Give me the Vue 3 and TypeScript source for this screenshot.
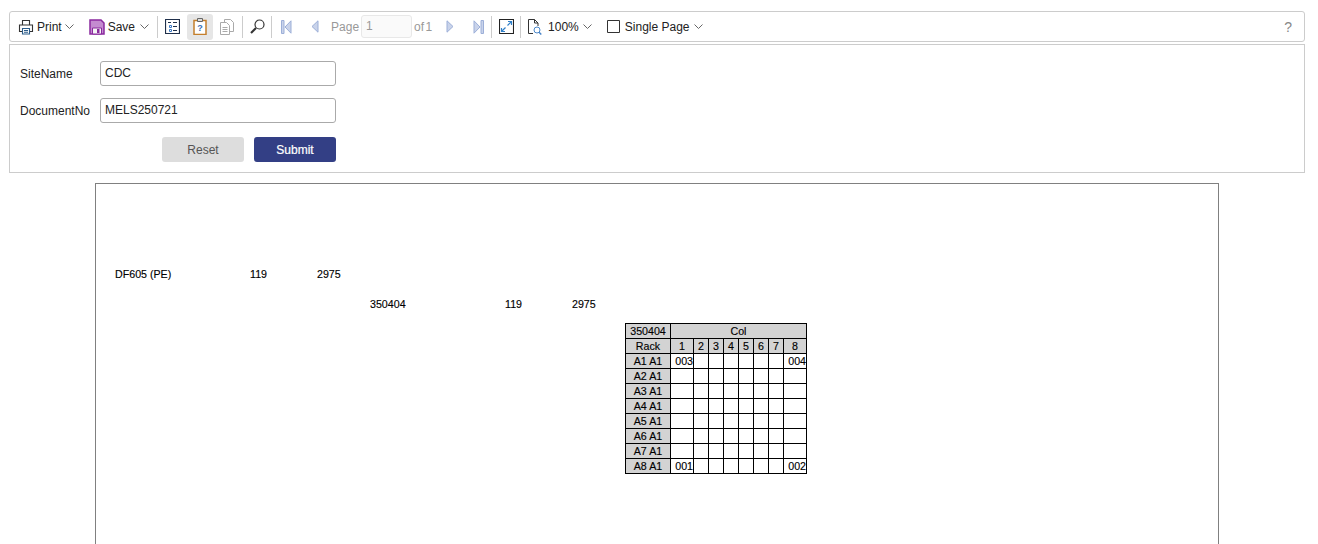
<script setup lang="ts">
const cols: number[] = [1, 2, 3, 4, 5, 6, 7, 8]
const racks: string[] = ['A1 A1', 'A2 A1', 'A3 A1', 'A4 A1', 'A5 A1', 'A6 A1', 'A7 A1', 'A8 A1']
const cells: Record<string, string> = {
  'A1 A1-1': '003',
  'A1 A1-8': '004',
  'A8 A1-1': '001',
  'A8 A1-8': '002',
}
</script>

<template>
  <div class="page">
    <div class="toolbar">
      <button class="tool t-print">
        <svg width="16" height="16" viewBox="0 0 16 16" fill="none" stroke="#333" stroke-width="1.100">
          <path d="M4.500 6V1.500h7V6M4.500 12.500H1.500v-6.500h13v6.500h-3" />
          <path d="M4.500 9.500h7v5.500h-7z" stroke="#2b5c8a" />
          <path d="M6 11.500h4M6 13.300h4" stroke="#2b5c8a" />
        </svg>
        <span>Print</span>
        <svg class="chev" width="9" height="5" viewBox="0 0 9 5"><path d="M.5.5l4 4 4-4" fill="none" stroke="#666" /></svg>
      </button>
      <button class="tool t-save">
        <svg width="16" height="16" viewBox="0 0 16 16">
          <path d="M1 1h11l3 3v11H1z" fill="#c48bd0" stroke="#8a2a9e" stroke-width="1.500" />
          <path d="M3.500 9h9v6h-9z" fill="#f4f4f4" stroke="#8a2a9e" />
          <path d="M8 10h2.500v4H8z" fill="#8a2a9e" />
        </svg>
        <span>Save</span>
        <svg class="chev" width="9" height="5" viewBox="0 0 9 5"><path d="M.5.5l4 4 4-4" fill="none" stroke="#666" /></svg>
      </button>
      <i class="sep s1"></i>
      <button class="icon t-tree">
        <svg width="15" height="15" viewBox="0 0 15 15" fill="none">
          <path d="M.5.500h14v14H.5z" stroke="#1f2f4a" stroke-width="1.200" />
          <path d="M3 3.500h3M8 3.500h4M8 7.500h4M8 11.500h4" stroke="#1f2f4a" />
          <path d="M4.500 6.500h2v2h-2zM4.500 10.500h2v2h-2z" stroke="#3b78c4" />
        </svg>
      </button>
      <button class="icon t-param active">
        <svg width="14" height="17" viewBox="0 0 14 17" fill="none">
          <path d="M1 2.500h12v14H1z" fill="#fff" stroke="#c47f2c" stroke-width="1.500" />
          <path d="M4.500 .5h5v3h-5z" fill="#ddd" stroke="#666" />
          <text x="7" y="12.500" text-anchor="middle" class="q">?</text>
        </svg>
      </button>
      <button class="icon t-pages">
        <svg width="15" height="16" viewBox="0 0 15 16" fill="none" stroke="#aaa">
          <path d="M4.500.5h6l3 3v9h-9z" />
          <path d="M.5 3.500h6l3 3v9h-9z" fill="#fff" />
          <path d="M2.500 8.500h5M2.500 10.500h5M2.500 12.500h5" />
        </svg>
      </button>
      <i class="sep s2"></i>
      <button class="icon t-find">
        <svg width="15" height="15" viewBox="0 0 15 15" fill="none" stroke="#333">
          <circle cx="9.500" cy="5.500" r="4.500" stroke-width="1.200" />
          <path d="M6 9l-5 5" stroke-width="2.200" />
        </svg>
      </button>
      <i class="sep s3"></i>
      <button class="icon t-first">
        <svg width="11" height="14" viewBox="0 0 11 14"><path d="M.5.500h2.500v13H.5z" fill="#c9d3ea" stroke="#9cafd8" /><path d="M10 .8v12.400L4 7z" fill="#c9d3ea" stroke="#9cafd8" /></svg>
      </button>
      <button class="icon t-prev">
        <svg width="8" height="13" viewBox="0 0 8 13"><path d="M7 .8v11.400L1 6.500z" fill="#c9d3ea" stroke="#9cafd8" /></svg>
      </button>
      <span class="label t-page">Page</span>
      <input class="page-input" value="1" disabled />
      <span class="label t-of">of 1</span>
      <button class="icon t-next">
        <svg width="8" height="13" viewBox="0 0 8 13"><path d="M1 .8v11.400L7 6.500z" fill="#c9d3ea" stroke="#9cafd8" /></svg>
      </button>
      <button class="icon t-last">
        <svg width="11" height="14" viewBox="0 0 11 14"><path d="M1 .8v12.400L7 7z" fill="#c9d3ea" stroke="#9cafd8" /><path d="M8 .5h2.500v13H8z" fill="#c9d3ea" stroke="#9cafd8" /></svg>
      </button>
      <i class="sep s4"></i>
      <button class="icon t-full">
        <svg width="15" height="15" viewBox="0 0 15 15" fill="none">
          <path d="M.5.500h14v14H.5z" stroke="#222" stroke-width="1.100" />
          <path d="M8.500 6.500l3.500-3.500M9 2.500h3.500V6M6.500 8.500L3 12M2.500 9v3.500H6" stroke="#2f7fc8" stroke-width="1.200" />
        </svg>
      </button>
      <i class="sep s5"></i>
      <button class="tool t-zoom">
        <svg width="14" height="16" viewBox="0 0 14 16" fill="none">
          <path d="M5 14.500H.5V.5h6l3.500 3.500v3M6.500.5v3.500H10" stroke="#333" />
          <circle cx="9" cy="11" r="3" stroke="#4a86c8" />
          <path d="M11 13.200l2.300 2.300" stroke="#4a86c8" stroke-width="1.500" />
        </svg>
        <span>100%</span>
        <svg class="chev" width="9" height="5" viewBox="0 0 9 5"><path d="M.5.5l4 4 4-4" fill="none" stroke="#666" /></svg>
      </button>
      <button class="tool t-single">
        <svg width="13" height="13" viewBox="0 0 13 13"><path d="M.5.500h12v12H.5z" fill="none" stroke="#333" /></svg>
        <span>Single Page</span>
        <svg class="chev" width="9" height="5" viewBox="0 0 9 5"><path d="M.5.5l4 4 4-4" fill="none" stroke="#666" /></svg>
      </button>
      <span class="help">?</span>
    </div>

    <form class="params" @submit.prevent>
      <div class="field">
        <label>SiteName</label>
        <input type="text" value="CDC" />
      </div>
      <div class="field">
        <label>DocumentNo</label>
        <input type="text" value="MELS250721" />
      </div>
      <div class="actions">
        <button type="button" class="btn reset">Reset</button>
        <button type="button" class="btn submit">Submit</button>
      </div>
    </form>

    <div class="report">
      <div class="row row-a">
        <span>DF605 (PE)</span><span>119</span><span>2975</span>
      </div>
      <div class="row row-b">
        <span>350404</span><span>119</span><span>2975</span>
      </div>
      <table class="grid">
        <colgroup>
          <col class="c0" />
          <col v-for="c in cols" :key="c" :class="c === 1 || c === 8 ? 'wide' : 'narrow'" />
        </colgroup>
        <tbody>
          <tr>
            <th>350404</th>
            <th colspan="8">Col</th>
          </tr>
          <tr>
            <th>Rack</th>
            <th v-for="c in cols" :key="c">{{ c }}</th>
          </tr>
          <tr v-for="r in racks" :key="r">
            <th>{{ r }}</th>
            <td v-for="c in cols" :key="c">{{ cells[r + '-' + c] ?? '' }}</td>
          </tr>
        </tbody>
      </table>
    </div>
  </div>
</template>

<style>
html, body { margin: 0; background: #fff; overflow: hidden; }
</style>

<style scoped>
.page {
  height: 544px;
  overflow: hidden;
  font-family: "Liberation Sans", Arial, sans-serif;
  font-size: 12px;
  color: #222;
  box-sizing: border-box;
  padding: 11px 13px 0 9px;
}
.toolbar {
  height: 31px;
  box-sizing: border-box;
  border: 1px solid #ccc;
  border-radius: 3px;
  display: flex;
  align-items: center;
  padding-left: 8px;
}
button {
  font: inherit;
  color: inherit;
  background: none;
  border: 0;
  padding: 0;
  margin: 0;
  display: flex;
  align-items: center;
  flex: none;
}
.icon { justify-content: center; height: 26px; }
.sep { width: 1px; height: 22px; background: #ccc; flex: none; }
.t-print { gap: 3px; }
.t-save { margin-left: 15px; gap: 3px; }
.t-save .chev { margin-left: 2px; }
.s1 { margin-left: 8px; }
.t-tree { margin-left: 7px; }
.t-param { margin-left: 7px; width: 26px; border-radius: 3px; }
.active { background: #e6e6e6; }
.t-pages { margin-left: 7px; }
.s2 { margin-left: 7px; }
.t-find { margin-left: 7px; }
.s3 { margin-left: 6px; }
.t-first { margin-left: 9px; }
.t-prev { margin-left: 19px; }
.label { color: #999; flex: none; }
.t-page { margin-left: 12px; }
.page-input {
  width: 51px;
  height: 23px;
  box-sizing: border-box;
  margin-left: 2px;
  border: 1px solid #e8e8e8;
  border-radius: 3px;
  background: #fafafa;
  font: inherit;
  color: #999;
  padding: 0 0 2px 4px;
  flex: none;
}
.t-of { margin-left: 2px; width: 18px; word-spacing: -2px; white-space: nowrap; }
.t-next { margin-left: 14px; }
.t-last { margin-left: 19px; }
.s4 { margin-left: 7px; }
.t-full { margin-left: 7px; }
.s5 { margin-left: 6px; }
.t-zoom { margin-left: 7px; gap: 6px; }
.t-zoom .chev { margin-left: -2px; }
.t-single { margin-left: 15px; gap: 5px; }
.t-single .chev { margin-left: -1px; }
.help { margin-left: auto; margin-right: 12px; color: #888; font-size: 14px; }
.q { font-size: 9px; font-weight: bold; fill: #3a6fb5; font-family: "Liberation Sans", sans-serif; }

.params {
  margin-top: 2px;
  height: 129px;
  box-sizing: border-box;
  border: 1px solid #ccc;
  padding-top: 16px;
  width: 100%;
}
.field {
  display: flex;
  align-items: center;
  height: 25px;
  margin-bottom: 12px;
  padding-left: 10px;
}
.field label { width: 80px; flex: none; }
.field input {
  width: 236px;
  height: 25px;
  box-sizing: border-box;
  border: 1px solid #aaa;
  border-radius: 3px;
  font: inherit;
  color: #222;
  padding: 0 0 1px 4px;
  outline: none;
}
.actions {
  display: flex;
  gap: 10px;
  padding-left: 152px;
  margin-top: 14px;
}
.btn {
  width: 82px;
  height: 25px;
  border-radius: 3px;
  justify-content: center;
}
.reset { background: #ddd; color: #555; }
.submit { background: #333f85; color: #fff; -webkit-text-stroke: 0.2px #fff; }

.report {
  margin: 10px 0 0 86px;
  width: 1124px;
  height: 400px;
  box-sizing: border-box;
  border: 1px solid #808080;
  color: #000;
  font-size: 10.67px;
  padding-top: 84px;
  -webkit-text-stroke: 0.14px #000;
}
.row { display: grid; height: 12px; line-height: 12px; }
.row-a { grid-template-columns: 135px 67px auto; padding-left: 19px; }
.row-b { grid-template-columns: 135px 67px auto; padding-left: 274px; margin-top: 18px; }
.grid {
  border-collapse: collapse;
  table-layout: fixed;
  width: 181px;
  margin: 13px 0 0 529px;
}
.grid th, .grid td {
  border: 1px solid #000;
  height: 14px;
  padding: 0;
  font-size: 10.67px;
  font-weight: normal;
  line-height: 12px;
  text-align: center;
  overflow: hidden;
}
.grid td { text-align: right; background: #fff; }
.grid th { background: #d3d3d3; }
.c0 { width: 45px; }
.wide { width: 23px; }
.narrow { width: 15px; }
</style>
